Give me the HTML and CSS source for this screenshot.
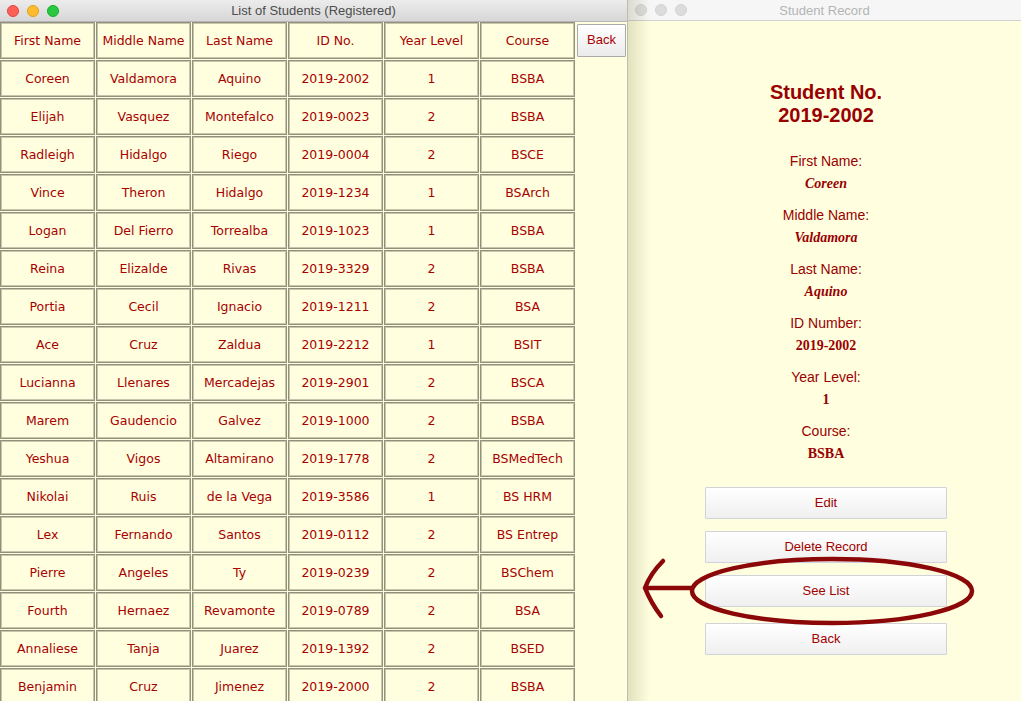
FILE: index.html
```html
<!DOCTYPE html>
<html>
<head>
<meta charset="utf-8">
<link rel="stylesheet" href="styles.css">
</head>
<body>
<div class="desk">
  <div class="win win-list">
    <div class="titlebar">
      <div class="lights">
        <span class="light red"></span><span class="light yellow"></span><span class="light green"></span>
      </div>
      <div class="title">List of Students (Registered)</div>
    </div>
    <div class="list-body">
      <div class="grid">
        <div class="cell">First Name</div><div class="cell">Middle Name</div><div class="cell">Last Name</div><div class="cell">ID No.</div><div class="cell">Year Level</div><div class="cell">Course</div>
        <div class="cell">Coreen</div><div class="cell">Valdamora</div><div class="cell">Aquino</div><div class="cell">2019-2002</div><div class="cell">1</div><div class="cell">BSBA</div>
        <div class="cell">Elijah</div><div class="cell">Vasquez</div><div class="cell">Montefalco</div><div class="cell">2019-0023</div><div class="cell">2</div><div class="cell">BSBA</div>
        <div class="cell">Radleigh</div><div class="cell">Hidalgo</div><div class="cell">Riego</div><div class="cell">2019-0004</div><div class="cell">2</div><div class="cell">BSCE</div>
        <div class="cell">Vince</div><div class="cell">Theron</div><div class="cell">Hidalgo</div><div class="cell">2019-1234</div><div class="cell">1</div><div class="cell">BSArch</div>
        <div class="cell">Logan</div><div class="cell">Del Fierro</div><div class="cell">Torrealba</div><div class="cell">2019-1023</div><div class="cell">1</div><div class="cell">BSBA</div>
        <div class="cell">Reina</div><div class="cell">Elizalde</div><div class="cell">Rivas</div><div class="cell">2019-3329</div><div class="cell">2</div><div class="cell">BSBA</div>
        <div class="cell">Portia</div><div class="cell">Cecil</div><div class="cell">Ignacio</div><div class="cell">2019-1211</div><div class="cell">2</div><div class="cell">BSA</div>
        <div class="cell">Ace</div><div class="cell">Cruz</div><div class="cell">Zaldua</div><div class="cell">2019-2212</div><div class="cell">1</div><div class="cell">BSIT</div>
        <div class="cell">Lucianna</div><div class="cell">Llenares</div><div class="cell">Mercadejas</div><div class="cell">2019-2901</div><div class="cell">2</div><div class="cell">BSCA</div>
        <div class="cell">Marem</div><div class="cell">Gaudencio</div><div class="cell">Galvez</div><div class="cell">2019-1000</div><div class="cell">2</div><div class="cell">BSBA</div>
        <div class="cell">Yeshua</div><div class="cell">Vigos</div><div class="cell">Altamirano</div><div class="cell">2019-1778</div><div class="cell">2</div><div class="cell">BSMedTech</div>
        <div class="cell">Nikolai</div><div class="cell">Ruis</div><div class="cell">de la Vega</div><div class="cell">2019-3586</div><div class="cell">1</div><div class="cell">BS HRM</div>
        <div class="cell">Lex</div><div class="cell">Fernando</div><div class="cell">Santos</div><div class="cell">2019-0112</div><div class="cell">2</div><div class="cell">BS Entrep</div>
        <div class="cell">Pierre</div><div class="cell">Angeles</div><div class="cell">Ty</div><div class="cell">2019-0239</div><div class="cell">2</div><div class="cell">BSChem</div>
        <div class="cell">Fourth</div><div class="cell">Hernaez</div><div class="cell">Revamonte</div><div class="cell">2019-0789</div><div class="cell">2</div><div class="cell">BSA</div>
        <div class="cell">Annaliese</div><div class="cell">Tanja</div><div class="cell">Juarez</div><div class="cell">2019-1392</div><div class="cell">2</div><div class="cell">BSED</div>
        <div class="cell">Benjamin</div><div class="cell">Cruz</div><div class="cell">Jimenez</div><div class="cell">2019-2000</div><div class="cell">2</div><div class="cell">BSBA</div>
      </div>
      <div class="side">
        <button class="btn-small">Back</button>
      </div>
    </div>
  </div>

  <div class="win win-record">
    <div class="titlebar inactive">
      <div class="lights">
        <span class="light gray"></span><span class="light gray"></span><span class="light gray"></span>
      </div>
      <div class="title">Student Record</div>
    </div>
    <div class="record-body">
      <h1 class="rec-title">Student No.<br>2019-2002</h1>
      <div class="field"><div class="label">First Name:</div><div class="value">Coreen</div></div>
      <div class="field"><div class="label">Middle Name:</div><div class="value">Valdamora</div></div>
      <div class="field"><div class="label">Last Name:</div><div class="value">Aquino</div></div>
      <div class="field"><div class="label">ID Number:</div><div class="value upright">2019-2002</div></div>
      <div class="field"><div class="label">Year Level:</div><div class="value upright">1</div></div>
      <div class="field"><div class="label">Course:</div><div class="value upright">BSBA</div></div>
      <div class="actions">
        <button class="btn">Edit</button>
        <button class="btn">Delete Record</button>
        <button class="btn">See List</button>
        <button class="btn btn-last">Back</button>
      </div>
    </div>
    <div class="shade"></div>
    <svg class="annot" width="393" height="701" viewBox="0 0 393 701">
      <ellipse cx="204" cy="591" rx="140" ry="32" fill="none" stroke="#8c0808" stroke-width="4.5"/>
      <line x1="18" y1="588" x2="64" y2="588" stroke="#8c0808" stroke-width="4.5" stroke-linecap="round"/>
      <path d="M 35 561 Q 22 574 17 588 Q 23 603 33 616" fill="none" stroke="#8c0808" stroke-width="4.5" stroke-linecap="round"/>
    </svg>
  </div>
</div>
</body>
</html>
```

FILE: styles.css
```css
* { box-sizing: border-box; }
html, body { margin: 0; padding: 0; }
body {
  width: 1021px;
  height: 701px;
  overflow: hidden;
  background: #ffffe0;
  font-family: "Liberation Sans", Arial, sans-serif;
}
.desk {
  display: flex;
  width: 1021px;
  height: 701px;
}
.win {
  display: flex;
  flex-direction: column;
  background: #ffffe0;
  height: 701px;
}
.win-list {
  width: 628px;
  border-right: 1px solid #bdbdb0;
  flex: none;
}
.win-record {
  flex: 1;
  position: relative;
}
.titlebar {
  height: 22px;
  flex: none;
  display: flex;
  align-items: center;
  position: relative;
  background: linear-gradient(#ececec, #d7d7d7);
  border-bottom: 1px solid #b5b5b5;
}
.titlebar.inactive {
  height: 21px;
  background: #f6f6f6;
  border-bottom: 1px solid #d1d1d1;
}
.lights {
  display: flex;
  gap: 8px;
  padding-left: 7px;
}
.light {
  width: 12px;
  height: 12px;
  border-radius: 50%;
}
.red { background: #fe5f57; border: 1px solid #e2463f; }
.yellow { background: #febc2e; border: 1px solid #e1a116; }
.green { background: #28c840; border: 1px solid #14ae2a; }
.gray { background: #dcdcdc; border: 1px solid #d2d2d2; }
.inactive .lights { padding-left: 7px; }
.title {
  position: absolute;
  left: 0;
  right: 0;
  text-align: center;
  font-size: 13px;
  color: #4d4d4d;
}
.inactive .title { color: #b4b4b4; }

.list-body {
  display: flex;
  flex: 1;
  overflow: hidden;
}
.grid {
  display: grid;
  grid-template-columns: repeat(6, 95px);
  grid-auto-rows: 37px;
  gap: 1px;
  width: 575px;
  flex: none;
  align-content: start;
}
.cell {
  display: flex;
  align-items: center;
  justify-content: center;
  background: #ffffe0;
  border: 1px solid #92927c;
  box-shadow: inset 0 0 0 1px #c6c6ae;
  color: #a80000;
  font-family: "DejaVu Sans", Verdana, sans-serif;
  font-size: 12.5px;
  white-space: nowrap;
}
.side {
  flex: 1;
  padding: 2px 2px 0 2px;
}
.btn-small {
  width: 49px;
  height: 33px;
  background: linear-gradient(#ffffff, #ebebeb);
  border: 1px solid #aaaaaa;
  border-radius: 1px;
  color: #a80000;
  font-family: "Liberation Sans", Arial, sans-serif;
  font-size: 13px;
  padding: 0 0 2px 0;
}

.record-body {
  display: flex;
  flex-direction: column;
  align-items: center;
  padding-top: 60px;
  padding-left: 3px;
  color: #990000;
}
.rec-title {
  margin: 0 0 26px 0;
  font-size: 20px;
  line-height: 23px;
  font-weight: bold;
  text-align: center;
}
.field {
  text-align: center;
  margin-bottom: 15px;
}
.label {
  font-size: 14px;
  line-height: 17px;
  margin-bottom: 5px;
}
.value {
  font-family: "Liberation Serif", "Times New Roman", serif;
  font-weight: bold;
  font-style: italic;
  font-size: 14px;
  line-height: 17px;
}
.value.upright { font-style: normal; }
.actions {
  display: flex;
  flex-direction: column;
  gap: 12px;
  margin-top: 10px;
}
.btn {
  width: 242px;
  height: 32px;
  background: linear-gradient(#ffffff, #f0f0f0);
  border: 1px solid #d2d2dc;
  border-radius: 1px;
  color: #a00000;
  font-family: "Liberation Sans", Arial, sans-serif;
  font-size: 13px;
  padding: 0 0 2px 0;
}
.btn-last { margin-top: 4px; }
.shade {
  position: absolute;
  left: 0;
  top: 0;
  bottom: 0;
  width: 22px;
  background: linear-gradient(to right, rgba(120,120,70,0.22), rgba(120,120,70,0));
  pointer-events: none;
}
.annot {
  position: absolute;
  left: 0;
  top: 0;
  pointer-events: none;
}
```
